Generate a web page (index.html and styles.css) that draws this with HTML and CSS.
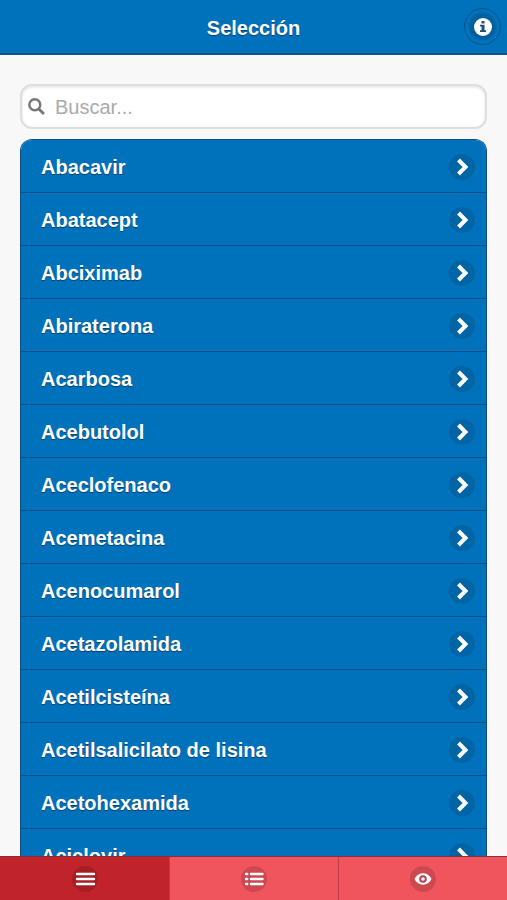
FILE: index.html
```html
<!DOCTYPE html>
<html lang="es">
<head>
<meta charset="utf-8">
<meta name="viewport" content="width=device-width, initial-scale=1">
<title>Selección</title>
<link rel="stylesheet" href="styles.css">
</head>
<body>
<svg class="defs" aria-hidden="true">
  <symbol id="chevron" viewBox="0 0 26 26">
    <circle cx="13" cy="13" r="13" fill="#000" fill-opacity=".12"/>
    <path d="M9.500 6 16.500 13 9.500 20" fill="none" stroke="#fff" stroke-width="4"/>
  </symbol>
</svg>
<header class="header">
  <h1 class="title">Selección</h1>
  <button class="info" type="button" aria-label="Información">
    <svg class="info-icon" viewBox="0 0 18 18" aria-hidden="true">
      <circle cx="9" cy="9" r="9" fill="#fff"/>
      <path d="M7.5 3h3v2.500h-3zM6 6.800h4.500v5.400h1.500V14H6v-1.800h1.500V8.600H6z" fill="#1d4f78"/>
    </svg>
  </button>
</header>
<main class="content">
  <label class="search">
    <svg class="search-icon" viewBox="0 0 18 18" aria-hidden="true">
      <circle cx="7.200" cy="7.200" r="5.800" fill="none" stroke="#777" stroke-width="2.600"/>
      <path d="m11.300 11.300 5.600 5.600" stroke="#777" stroke-width="3"/>
    </svg>
    <input class="search-input" type="text" placeholder="Buscar..." aria-label="Buscar">
  </label>
  <ul class="list">
    <li><a class="row" href="#">Abacavir<svg class="badge" aria-hidden="true"><use href="#chevron"/></svg></a></li>
    <li><a class="row" href="#">Abatacept<svg class="badge" aria-hidden="true"><use href="#chevron"/></svg></a></li>
    <li><a class="row" href="#">Abciximab<svg class="badge" aria-hidden="true"><use href="#chevron"/></svg></a></li>
    <li><a class="row" href="#">Abiraterona<svg class="badge" aria-hidden="true"><use href="#chevron"/></svg></a></li>
    <li><a class="row" href="#">Acarbosa<svg class="badge" aria-hidden="true"><use href="#chevron"/></svg></a></li>
    <li><a class="row" href="#">Acebutolol<svg class="badge" aria-hidden="true"><use href="#chevron"/></svg></a></li>
    <li><a class="row" href="#">Aceclofenaco<svg class="badge" aria-hidden="true"><use href="#chevron"/></svg></a></li>
    <li><a class="row" href="#">Acemetacina<svg class="badge" aria-hidden="true"><use href="#chevron"/></svg></a></li>
    <li><a class="row" href="#">Acenocumarol<svg class="badge" aria-hidden="true"><use href="#chevron"/></svg></a></li>
    <li><a class="row" href="#">Acetazolamida<svg class="badge" aria-hidden="true"><use href="#chevron"/></svg></a></li>
    <li><a class="row" href="#">Acetilcisteína<svg class="badge" aria-hidden="true"><use href="#chevron"/></svg></a></li>
    <li><a class="row" href="#">Acetilsalicilato de lisina<svg class="badge" aria-hidden="true"><use href="#chevron"/></svg></a></li>
    <li><a class="row" href="#">Acetohexamida<svg class="badge" aria-hidden="true"><use href="#chevron"/></svg></a></li>
    <li><a class="row" href="#">Aciclovir<svg class="badge" aria-hidden="true"><use href="#chevron"/></svg></a></li>
  </ul>
</main>
<nav class="tabs">
  <a class="tab active" href="#" aria-label="Menú">
    <svg class="badge" viewBox="0 0 26 26" aria-hidden="true">
      <circle cx="13" cy="13" r="13" fill="#000" fill-opacity=".14"/>
      <path d="M5 8h17M5 13h17M5 18h17" stroke="#fff" stroke-width="2.400" stroke-linecap="round"/>
    </svg>
  </a>
  <a class="tab" href="#" aria-label="Lista">
    <svg class="badge" viewBox="0 0 26 26" aria-hidden="true">
      <circle cx="13" cy="13" r="13" fill="#000" fill-opacity=".14"/>
      <path d="M10 8h11.500M10 13h11.500M10 18h11.500M5 8h1.200M5 13h1.200M5 18h1.200" stroke="#fff" stroke-width="2.400" stroke-linecap="round"/>
    </svg>
  </a>
  <a class="tab" href="#" aria-label="Ver">
    <svg class="badge" viewBox="0 0 26 26" aria-hidden="true">
      <circle cx="13" cy="13" r="13" fill="#000" fill-opacity=".14"/>
      <path d="M4.500 13C8 5.400 18 5.400 21.500 13 18 20.600 8 20.600 4.500 13z" fill="#fff"/>
      <circle cx="13" cy="13" r="2.800" fill="#fff" stroke="#b8434c" stroke-width="2"/>
    </svg>
  </a>
</nav>
</body>
</html>
```
FILE: styles.css
```css
* {
  box-sizing: border-box;
}

body {
  margin: 0;
  height: 100vh;
  display: flex;
  flex-direction: column;
  background: #f8f8f8;
  font-family: "Liberation Sans", Arial, sans-serif;
  font-size: 20px;
  line-height: 24px;
}

.defs {
  position: absolute;
  width: 0;
  height: 0;
}

.header {
  flex: none;
  display: grid;
  grid-template-columns: 1fr auto 1fr;
  align-items: center;
  height: 55px;
  padding: 0 6px;
  background: #0072bc;
  border-bottom: 2px solid #0b5590;
}

.title {
  grid-column: 2;
  margin: 0;
  padding-top: 2px;
  font-size: 20px;
  color: #fff;
  text-shadow: 0 1px 1px #00406c;
}

.info {
  justify-self: end;
  display: flex;
  align-items: center;
  justify-content: center;
  width: 37px;
  height: 37px;
  padding: 0;
  border: 1px solid #0a528a;
  border-radius: 50%;
  background: radial-gradient(circle, #005f9e 0 12px, #0072bc 15px);
}

.info-icon {
  width: 18px;
  height: 18px;
}

.content {
  flex: 1;
  min-height: 0;
  overflow-y: auto;
  scrollbar-width: none;
  padding: 29px 20px 0;
}

.search {
  display: flex;
  align-items: center;
  gap: 10px;
  height: 45px;
  padding: 0 6px;
  border: 2px solid #dedede;
  border-radius: 12px;
  background: #fff;
  box-shadow: inset 0 1px 3px #ddd;
}

.search-icon {
  flex: none;
  width: 17px;
  height: 17px;
}

.search-input {
  flex: 1;
  min-width: 0;
  padding: 0;
  border: 0;
  outline: 0;
  background: transparent;
  font: inherit;
  color: #333;
}

.search-input::placeholder {
  color: #aaa;
}

.list {
  margin: 10px 0 0;
  padding: 0;
  list-style: none;
  border: 1px solid #0b4f86;
  border-bottom: 0;
  border-radius: 12px 12px 0 0;
  overflow: hidden;
}

.row {
  display: flex;
  align-items: center;
  justify-content: space-between;
  height: 53px;
  padding: 2px 11px 0 20px;
  background: #0072bc;
  border-bottom: 1px solid #0b4f86;
  color: #fff;
  font-weight: bold;
  text-decoration: none;
  text-shadow: 0 1px 1px #00406c;
}

.badge {
  flex: none;
  width: 26px;
  height: 26px;
}

.tabs {
  flex: none;
  display: grid;
  grid-template-columns: repeat(3, 1fr);
  height: 44px;
  border-top: 1px solid #8f2c3c;
}

.tab {
  display: flex;
  align-items: center;
  justify-content: center;
  background: #f0545c;
}

.tab.active {
  background: #c1232b;
}

.tab + .tab {
  border-left: 1px solid #b83e47;
}
```
